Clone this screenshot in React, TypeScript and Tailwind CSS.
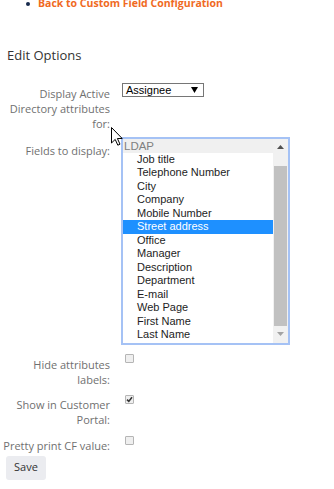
import React from "react";

const items = [
  "Job title",
  "Telephone Number",
  "City",
  "Company",
  "Mobile Number",
  "Street address",
  "Office",
  "Manager",
  "Description",
  "Department",
  "E-mail",
  "Web Page",
  "First Name",
  "Last Name",
];

const labelCls =
  "w-[110px] shrink-0 text-right text-[11px] leading-[15px] text-[#707070]";

function Checkbox({ checked }: { checked?: boolean }) {
  return (
    <div className="w-[9px] h-[9px] rounded-[1px] border border-[#b5b5b5] bg-[#efefef] flex items-center justify-center">
      {checked && (
        <svg width="7" height="7" viewBox="0 0 7 7">
          <path d="M1 3.6 L2.8 5.4 L6 1.2" stroke="#333" strokeWidth="1.6" fill="none" />
        </svg>
      )}
    </div>
  );
}

export default function App() {
  return (
    <div
      className="relative w-[334px] h-[489px] overflow-hidden bg-white"
      style={{ fontFamily: "'Open Sans', 'Noto Sans', sans-serif" }}
    >
      {/* back link */}
      <div className="flex items-center -mt-[4px] pl-[26px] h-[15px]">
        <span className="w-[4px] h-[4px] rounded-full bg-[#172b4d]" />
        <span className="ml-[8px] text-[10.5px] font-bold leading-[15px] text-[#f06a1f]">
          Back to Custom Field Configuration
        </span>
      </div>

      <h2 className="mt-[36px] pl-[7px] text-[13px] leading-[16px] text-[#333]">
        Edit Options
      </h2>

      {/* Display AD attributes */}
      <div className="flex mt-[20px]">
        <div className={labelCls + " pt-[2.5px]"}>
          Display Active
          <br />
          Directory attributes
          <br />
          for:
        </div>
        <div
          className="ml-[12px] w-[82px] h-[14px] border border-[#767676] flex items-center justify-between pl-[3px] pr-[5px] text-[11px] leading-none text-black"
          style={{ fontFamily: "'Liberation Sans', Arial, sans-serif" }}
        >
          <span>Assignee</span>
          <svg width="7" height="6" viewBox="0 0 7 6">
            <path d="M0 0 L7 0 L3.5 6 Z" fill="#000" />
          </svg>
        </div>
      </div>

      {/* Fields to display */}
      <div className="flex mt-[6px]">
        <div className={labelCls + " pt-[6px]"}>Fields to display:</div>
        <div
          className="ml-[11px] w-[169px] h-[208px] border-2 border-[#a5c2f5] flex"
          style={{ fontFamily: "'Liberation Sans', Arial, sans-serif" }}
        >
          <div className="w-[150px] flex flex-col">
            <div className="h-[14px] bg-[#f0f0f0] pl-[1px] text-[11.5px] leading-[14px] text-[#808080]">
              LDAP
            </div>
            {items.map((it) => (
              <div
                key={it}
                className={
                  it === "Street address"
                    ? "h-[13.5px] leading-[13.5px] pl-[14px] text-[11px] bg-[#1e90ff] text-white"
                    : "h-[13.5px] leading-[13.5px] pl-[14px] text-[11px] text-[#1d1d1d]"
                }
              >
                {it}
              </div>
            ))}
          </div>
          <div className="w-[15px] bg-[#f1f1f1] flex flex-col">
            <div className="h-[17px] flex items-center justify-center">
              <svg width="7" height="4" viewBox="0 0 7 4">
                <path d="M0 4 L7 4 L3.5 0 Z" fill="#505050" />
              </svg>
            </div>
            <div className="mt-[10px] h-[160px] mx-[1px] bg-[#c1c1c1]" />
            <div className="flex-1" />
            <div className="h-[17px] flex items-center justify-center">
              <svg width="7" height="4" viewBox="0 0 7 4">
                <path d="M0 0 L7 0 L3.5 4 Z" fill="#a3a3a3" />
              </svg>
            </div>
          </div>
        </div>
      </div>

      {/* Hide attributes labels */}
      <div className="flex mt-[9px]">
        <div className={labelCls + " pt-[3.5px] leading-[14.5px]"}>
          Hide attributes
          <br />
          labels:
        </div>
        <div className="ml-[15px]">
          <Checkbox />
        </div>
      </div>

      {/* Show in Customer Portal */}
      <div className="flex mt-[7.5px]">
        <div className={labelCls + " pt-[2.5px]"}>
          Show in Customer
          <br />
          Portal:
        </div>
        <div className="ml-[15px]">
          <Checkbox checked />
        </div>
      </div>

      {/* Pretty print */}
      <div className="flex mt-[9px]">
        <div className={labelCls + " pt-[1.5px]"}>Pretty print CF value:</div>
        <div className="ml-[15px]">
          <Checkbox />
        </div>
      </div>

      <button className="mt-[3px] ml-[6px] w-[40px] h-[24px] rounded-[3px] bg-[#ebecf0] text-[11px] text-[#333]">
        Save
      </button>

      {/* mouse cursor */}
      <svg
        className="absolute left-[111px] top-[127px]"
        width="12"
        height="19"
        viewBox="0 0 12 19"
      >
        <path
          d="M0.5 0.5 L0.5 16 L4.2 12.4 L6.8 18.2 L9 17.2 L6.4 11.5 L11.2 11.5 Z"
          fill="#fff"
          stroke="#000"
          strokeWidth="1"
          strokeLinejoin="round"
        />
      </svg>
    </div>
  );
}
